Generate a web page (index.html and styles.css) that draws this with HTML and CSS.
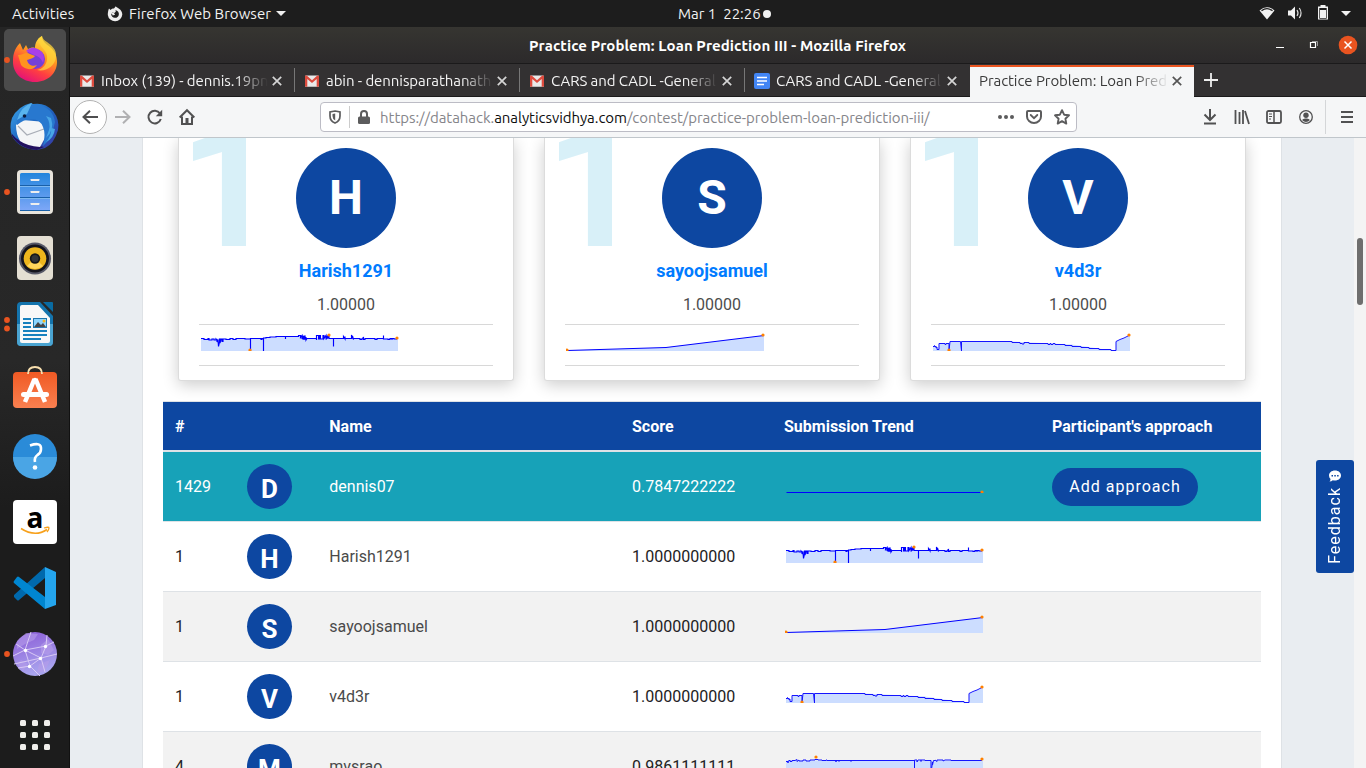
FILE: index.html
```html
<!DOCTYPE html>
<html lang="en">
<head>
<meta charset="utf-8">
<title>Practice Problem: Loan Prediction III</title>
<link rel="stylesheet" href="styles.css">
</head>
<body>
<svg class="defs" width="0" height="0">
  <defs>
    <symbol id="gmail" viewBox="0 0 14 12"><path d="M1 .5h12a1 1 0 0 1 1 1V11a.7.7 0 0 1-.7.7H.7A.7.7 0 0 1 0 11V1.500a1 1 0 0 1 1-1z" fill="#e9e9e9"/><path d="M0 1.500C0 .3 1.200.2 2 .8l5 4.400L12 .8c.8-.6 2-.5 2 .7V11a.7.7 0 0 1-.7.7h-1.600V4L7 8 2.300 4v7.700H.7A.7.7 0 0 1 0 11z" fill="#dd4b3e"/></symbol>
    <symbol id="x" viewBox="0 0 10 10"><path d="M.8.8l8.400 8.400M9.200.8L.8 9.200" fill="none" stroke="currentColor" stroke-width="1.700"/></symbol>
    <symbol id="s-harish" viewBox="0 0 200 20">
      <path d="M1 7.500H64L64.500 6.500H76V5.500H99V4.500H106V7.500H198V20H1z" fill="#cdf"/>
      <path d="M1 7.500H4V8.500H8V7.500H9V9H12V8H14V9H16V8L17 9V11L18 8.500 18.500 15.500 19.500 11V8H20V12L21 8H22V10.500H23V8H26V8.500H30V7.500H33V8.500H36V7.500H45V8H50.500V19.500V7.500H61V8.500H62V7.500H63.500V20V7H66V6.500H70V6H76V5.500H85.500V8V5.500H98.500V4.500H100.500V6.500L102 4.500V8L103 4.500V8.500L104 5V8.500L105 4.500V8.500L106 6V9L107 7.500H116.500V9V4.500H118.500V8H119.500V4.500H120.500V8H123V4.500H124V7.500L126 4.500V8.500L127.500 4.500V7.500L129 4.500V7.500H133.500V15.500V7.500H143.500V5.500L145 8V5.500V7.500H151.500V4L152.500 7.500V5L153.500 8.500V7.500H160V8.500H162V7.500L163.500 6.500V8.500H165V7.500H175V8.500H177V7.500H183.500V4.500V8H188V8.500H190V7.500H192V9V7.500H194V8H197" fill="none" stroke="#00f" stroke-width="1.150"/>
      <g fill="#ff8000"><circle cx="50" cy="19" r="1.600"/><circle cx="129" cy="4" r="1.600"/><circle cx="197" cy="7" r="1.600"/></g>
    </symbol>
    <symbol id="s-sayooj" viewBox="0 0 200 20">
      <path d="M1 19.500L100 16.500 198 4.500V20H1z" fill="#cdf"/><path d="M1 19.500L100 16.500 198 4.500" fill="none" stroke="#00f"/>
      <g fill="#ff8000"><circle cx="1" cy="19" r="1.600"/><circle cx="197" cy="4" r="1.600"/></g>
    </symbol>
    <symbol id="s-v4d3r" viewBox="0 0 200 20">
      <path d="M1 15L6.500 18 7.500 12.500H18V10.500H80L140 13.500 180 19.500 184 20V10.500L198 5V20H1z" fill="#cdf"/>
      <path d="M1 15.500H2.500V14.500L3 16L4 15V17L5 16V18.500L7 18.500V12.500H13V13.500H14V12.500H17V19.500L18 10.500H28.500L29.500 20V10.500H80V11.500H88V12.500H90V13H92V11.500H97V12.500H116V13.500H118V12.500H119V13.500H121V12.500H123V13.500H133V14.500H140V15.500H149V16.500H157V17.500H167V18.500H179V19.500H184V10.500L188 8.500 192 7 197 4.500" fill="none" stroke="#1414ff"/>
      <g fill="#ff8000"><circle cx="17" cy="19" r="1.600"/><circle cx="197" cy="4" r="1.600"/></g>
    </symbol>
    <symbol id="s-mvsrao" viewBox="0 0 200 20">
      <path d="M1 7.500H198V20H1z" fill="#cdf"/>
      <path d="M1 8.500H3V10V8H4L5 7V8.500H7V7.500H10L12 6.500V8.500L14 7V8H18V7H21V8H25V7H30V6.500H33V7H37V7.500H41V7H42V7.500H51V9V7.500H54V8.500V7.500H66V8.500V7.500H86V7V7.500H129.500V20V7H132V9L133 7H136V8.500V7H140V7.500H146V20L147.500 9V12L148.500 7.500H150V7L152 8.500V7H158V8L160 7H166V7.500H197" fill="none" stroke="#1414ff"/>
      <g fill="#ff8000"><circle cx="31" cy="4" r="1.600"/><circle cx="197" cy="6" r="1.600"/></g>
    </symbol>
    <symbol id="s-flat" viewBox="0 0 200 20"><path d="M1.500 19.500H197" stroke="#00f"/><circle cx="197" cy="19" r="1.600" fill="#ff8000"/></symbol>
    <linearGradient id="ffbody" x1=".8" y1="0" x2=".3" y2="1"><stop offset="0" stop-color="#fff44f"/><stop offset=".4" stop-color="#ff9a1f"/><stop offset=".7" stop-color="#ff4040"/><stop offset="1" stop-color="#e3107a"/></linearGradient>
    <linearGradient id="blue" x1="0" y1="0" x2="0" y2="1"><stop offset="0" stop-color="#2385dc"/><stop offset="1" stop-color="#7fa8f8"/></linearGradient>
    <linearGradient id="orange" x1="0" y1="0" x2="0" y2="1"><stop offset="0" stop-color="#f05a24"/><stop offset="1" stop-color="#f98050"/></linearGradient>
    <linearGradient id="purple" x1="0" y1="0" x2=".3" y2="1"><stop offset="0" stop-color="#8a5ad6"/><stop offset="1" stop-color="#a9a4ee"/></linearGradient>
    <linearGradient id="bird" x1="0" y1="0" x2="1" y2="1"><stop offset="0" stop-color="#39a5ea"/><stop offset=".5" stop-color="#1f62be"/><stop offset="1" stop-color="#3a35a0"/></linearGradient>
  </defs>
</svg>

<header class="topbar">
  <span class="activities">Activities</span>
  <svg class="ff-mini" width="16" height="16" viewBox="0 0 16 16"><path d="M2 2.500l1.600 1.400C4.700 2.800 6 2.500 7 2.600L8.800.3c.6 1 1.900 1.600 3.200 2.500 2 1.300 3.300 3.200 3.300 5.700A7.300 7.300 0 0 1 .8 9C.7 6.500 1.300 4 2 2.500z" fill="#eee"/><path d="M5.500 6.300c1.500.4 2.700.2 3.200-.5.3-.5 0-1.300-.4-1.800 2.500.5 4 2.500 3.500 5A3.900 3.900 0 0 1 4.200 8.500z" fill="#1d1d1d"/><path d="M4.500 6.800l3.800-.7-1.200 1.400 1 1.200-2.400.7z" fill="#eee"/></svg>
  <span class="app-name">Firefox Web Browser</span>
  <svg class="caret" width="10" height="5"><path d="M0 0h10L5 5z" fill="#eee"/></svg>
  <span class="clock">Mar 1&nbsp; 22:26</span><i class="clock-dot"></i>
  <svg class="tray" width="106" height="27" viewBox="1260 0 106 27" fill="#f2f2f2"><path d="M1259.500 10.500q7.500-6.500 15 0L1267 19.500z"/><path d="M1261.500 10.800q5.500-4.300 11 0" fill="none" stroke="#1d1d1d" stroke-width="1.300"/><path d="M1288 10.500h3l4-4v13l-4-4h-3z"/><path d="M1297 10q2 3 0 6M1299.300 8q3.500 5 0 10" fill="none" stroke="#ddd" stroke-width="1.200"/><path d="M1320.500 5h5v1.500h2.500v13h-10v-13h2.500z" fill="#f2f2f2"/><path d="M1319.300 8h7.400v10.700h-7.400z" fill="#1d1d1d"/><path d="M1320 10h6v8h-6z"/><path d="M1341 11h10l-5 5z"/></svg>
</header>

<div class="desktop">
<nav class="dock">
  <svg class="slot" viewBox="0 0 70 66"><rect x="4" y="2" width="62" height="62" rx="5" fill="#4b4b4b"/><circle cx="7" cy="33" r="2.900" fill="#e95420"/>
    <path d="M14 26c1-4 3-7 6-10l3 7 3-5 2 4c2-1 5-2 7-1 0-5 2-9 7-12 0 5 4 8 8 11 5 4 7 9 7 15 0 11-9 20-22 20S13 46 13 35c0-3 0-6 1-9z" fill="url(#ffbody)"/><path d="M38 12c1 8 8 10 9 17 1 9-5 13-10 14 9 2 18-4 19-13 1-8-5-12-9-15-3-2-4-3-5-6-2 1-3 2-4 3z" fill="#ffd43b" opacity=".75"/><circle cx="35" cy="32" r="10" fill="#7540d8"/><path d="M26 24c3-3 8-5 13-1 5 2 6 8 4 13-2-5-5-7-9-8z" fill="#a83fe8"/><path d="M18 28c5 0 8-4 12-1l5 2c-2 3-6 3-8 4 1 5 6 7 10 5-4 6-12 5-16 0z" fill="#ff941f"/></svg>
  <svg class="slot" viewBox="0 0 70 66"><path d="M12 25Q18 13 31 10l2 1q12-2 20 7 7 9 5 19-4 14-13 18l-8 2Q19 56 12 43q-3-9 0-18z" fill="url(#bird)"/><path d="M12 41q6 8 18 10l14 3-7 3Q20 56 12 43z" fill="#23105f"/><path d="M16 32l6-5 24 2-1 16-5 9q-13-1-20-6-4-7-4-16z" fill="#f4f5f7"/><path d="M18 33l9 9 17-6" fill="none" stroke="#a9adb6" stroke-width="1.200"/><path d="M17 27Q22 12 37 11q16 4 18 18l-4 16-8 8q3-12 0-19-3-8-12-8-7 0-14 6z" fill="#2878cf"/><path d="M17 27q4-14 15-17l-5 11z" fill="#59b4ef"/><circle cx="24.500" cy="23" r="1.800" fill="#0d1c3f"/><path d="M46 23q5 7 3 14l-3 8q9-8 5-20zM51 35q1 7-5 14 8-4 9-13z" fill="#48a6e6"/></svg>
  <svg class="slot" viewBox="0 0 70 66"><circle cx="7" cy="33" r="2.900" fill="#e95420"/><rect x="17" y="11" width="36" height="44" rx="4" fill="#e8e4dc"/><rect x="20" y="14" width="30" height="38" rx="1.500" fill="url(#blue)"/><path d="M20 26.500h30M20 38.500h30M20 51.500h30" stroke="#1960a8"/><path d="M20 27.500h30M20 39.500h30" stroke="#7db8f0"/><path d="M31 20v1.500h8V20M31 32v1.500h8V32M31 44v1.500h8V44" fill="#eee" stroke="#eee"/></svg>
  <svg class="slot" viewBox="0 0 70 66"><rect x="17" y="11" width="36" height="44" rx="4" fill="#e4dfd3"/><circle cx="35" cy="33.500" r="16" fill="#575867"/><circle cx="35" cy="33.500" r="14" fill="#14141d"/><circle cx="35" cy="33.500" r="11.300" fill="#edb51d"/><path d="M35 33l-8 8q8 6 16 0z" fill="#ffd65c"/><circle cx="35" cy="33.500" r="5.200" fill="#161719"/><circle cx="35" cy="33.500" r="3.500" fill="#303338"/></svg>
  <svg class="slot" viewBox="0 0 70 66"><circle cx="7" cy="29" r="2.900" fill="#e95420"/><circle cx="7" cy="37.500" r="2.900" fill="#e95420"/><path d="M21 11h19l13 14v26q0 4-4 4H21q-4 0-4-4V15q0-4 4-4z" fill="#1474ad"/><path d="M17 33h36v18q0 4-4 4H21q-4 0-4-4z" fill="#4aa4d1"/><path d="M22 14h16l12 13v23q0 2-2 2H22q-2 0-2-2V16q0-2 2-2z" fill="#f8f8f8"/><path d="M43 11h9q1 0 1 1v9z" fill="#096ba2"/><path d="M23 28h8M23 32h8M23 36h8M23 40h24M23 44h24M23 48h18" stroke="#1881be" stroke-width="2"/><path d="M33 27h14v10H33z" fill="#1b75ac"/><path d="M34 28h12v8H34z" fill="#8dd6ff"/><path d="M34 36l4-5 3 3 2-2 3 4z" fill="#444"/><circle cx="44" cy="30" r="1.500" fill="#fcb714"/></svg>
  <svg class="slot" viewBox="0 0 70 66"><rect x="13" y="15" width="44" height="36" rx="4" fill="url(#orange)"/><path d="M28 17q0-7 7-7t7 7" fill="none" stroke="#f8dfae" stroke-width="1.800"/><path d="M34.500 22l-9.500 23M35.500 22l9.500 23" stroke="#fff" stroke-width="4.500"/><rect x="21" y="35" width="28" height="5" rx="2.500" fill="#fff"/><circle cx="35" cy="23" r="2.200" fill="#fff"/></svg>
  <svg class="slot" viewBox="0 0 70 66"><circle cx="35" cy="33" r="22" fill="#2a8bd8"/><path d="M13 34h44a22 22 0 0 1-44 0z" fill="#4aa5e5"/><path d="M30 22.500q11.500-4 11 3.500 0 4-3.500 6-3.500 2.500-2.500 7" fill="none" stroke="#fff" stroke-width="2.600"/><circle cx="35" cy="44.500" r="2.300" fill="#fff"/></svg>
  <svg class="slot" viewBox="0 0 70 66"><rect x="13" y="11" width="44" height="44" rx="4" fill="#fff"/><text x="26.500" y="38.500" class="amazon-a">a</text><path d="M21 39.500q14 9 26 1" fill="none" stroke="#f7a11c" stroke-width="1.600"/><path d="M44 39q5-1.500 5 0t-2 4" fill="none" stroke="#f7a11c" stroke-width="1.300"/></svg>
  <svg class="slot" viewBox="0 0 70 66"><path d="M14 40l31-28v11L19 45q-1 1-2 0l-3-3z" fill="#0069ad"/><path d="M14 26l3-4q1-1 2 0l26 20v12L14 28q-1-1 0-2z" fill="#0086d1"/><path d="M45 12l11 5v33l-11 4z" fill="#24a5ee"/></svg>
  <svg class="slot" viewBox="0 0 70 66"><circle cx="7" cy="33" r="2.900" fill="#e95420"/><circle cx="35" cy="33" r="22" fill="url(#purple)"/><path d="M17 20l9-8 12 1-4 6-9 4-8 5zM41 24l7-6 6 11-6 5-7-2zM21 39l7 4-5 7-6-7zM39 43l11-4-5 11-8 2z" fill="#b69de9" opacity=".6"/><path d="M13 35l12-6 21-4 8-4M14 43l27-6 16-4M25 29l16 8 4 14M25 29l5 16 10 10M30 45l11-8 5-12 1-11M16 23l9 6 6-18M18 47l12-2" fill="none" stroke="#d8c9f4"/><g fill="#fff"><circle cx="25.500" cy="29.500" r="1.700"/><circle cx="45.500" cy="25.500" r="1.700"/><circle cx="40.500" cy="37.500" r="1.700"/><circle cx="29.500" cy="45.500" r="1.700"/></g></svg>
  <svg class="apps" width="30" height="30" fill="#f0eeec"><rect width="6" height="6" rx="1.500"/><rect x="12" width="6" height="6" rx="1.500"/><rect x="24" width="6" height="6" rx="1.500"/><rect y="12" width="6" height="6" rx="1.500"/><rect x="12" y="12" width="6" height="6" rx="1.500"/><rect x="24" y="12" width="6" height="6" rx="1.500"/><rect y="24" width="6" height="6" rx="1.500"/><rect x="12" y="24" width="6" height="6" rx="1.500"/><rect x="24" y="24" width="6" height="6" rx="1.500"/></svg>
</nav>

<main class="window">
  <div class="titlebar"><span class="title">Practice Problem: Loan Prediction III - Mozilla Firefox</span>
    <svg class="controls" width="90" height="36" viewBox="1270 27 90 36"><path d="M1276 47.500h8" stroke="#fff"/><path d="M1310.500 42.500h5v5h-5z" fill="none" stroke="#fff" stroke-width="1.200"/><path d="M1312 41.500h5.500V46" fill="none" stroke="#999"/><circle cx="1348" cy="45" r="9.300" fill="#e95420"/><path d="M1344.500 41.500l7 7M1351.500 41.500l-7 7" stroke="#fff" stroke-width="1.500"/></svg>
  </div>
  <div class="tabs">
    <div class="tab"><svg width="14" height="12"><use href="#gmail"/></svg><span class="label">Inbox (139) - dennis.19pn</span><svg class="close" width="10" height="10"><use href="#x"/></svg></div>
    <div class="tab"><svg width="14" height="12"><use href="#gmail"/></svg><span class="label">abin - dennisparathanath</span><svg class="close" width="10" height="10"><use href="#x"/></svg></div>
    <div class="tab"><svg width="14" height="12"><use href="#gmail"/></svg><span class="label">CARS and CADL -General</span><svg class="close" width="10" height="10"><use href="#x"/></svg></div>
    <div class="tab docs"><svg width="16" height="16"><rect width="16" height="16" rx="2" fill="#4285f4"/><path d="M3 4.500h10M3 8h10M3 11.500h7" stroke="#fff" stroke-width="1.700"/></svg><span class="label">CARS and CADL -General</span><svg class="close" width="10" height="10"><use href="#x"/></svg></div>
    <div class="tab active"><span class="label">Practice Problem: Loan Pred</span><svg class="close" width="10" height="10"><use href="#x"/></svg></div>
    <svg class="plus" width="14" height="14"><path d="M7 0v14M0 7h14" stroke="#eee" stroke-width="1.800"/></svg>
  </div>
  <div class="navbar">
    <span class="back"><svg width="16" height="14"><path d="M16 7H1.500M8 .8L1.500 7 8 13.200" fill="none" stroke="#4f4f50" stroke-width="2"/></svg></span>
    <span class="btn fwd"><svg width="16" height="14"><path d="M0 7h14.500M8 .8L14.500 7 8 13.200" fill="none" stroke="#b0b0b2" stroke-width="2"/></svg></span>
    <span class="btn"><svg width="16" height="16"><path d="M13 4.500A6.300 6.300 0 1 0 13.800 10" fill="none" stroke="#515152" stroke-width="2"/><path d="M15.200.8v6.400H8.800z" fill="#515152"/></svg></span>
    <span class="btn"><svg width="16" height="16"><path d="M.7 8.500L8 1.200l7.300 7.300" fill="none" stroke="#515152" stroke-width="2"/><path d="M3 7.500V15h10V7.500" fill="none" stroke="#515152" stroke-width="2"/><path d="M6.500 9h3v6h-3z" fill="#515152"/></svg></span>
    <div class="urlbar">
      <svg width="12" height="14"><path d="M6 1Q8.500 1.500 11 2v4q0 5-5 7Q1 11 1 6V2Q3.500 1.500 6 1z" fill="none" stroke="#5c5c5d" stroke-width="1.700"/><path d="M6.200 3.500v7Q3.500 9 3.500 6V4z" fill="#5c5c5d"/></svg>
      <i class="url-sep"></i>
      <svg width="12" height="14"><path d="M1.500 6.500h9q1.500 0 1.500 1.500v4.500q0 1.500-1.500 1.500h-9Q0 14 0 12.500V8q0-1.500 1.500-1.500z" fill="#5c5c5d"/><path d="M3 7V4q0-3 3-3t3 3v3" fill="none" stroke="#5c5c5d" stroke-width="2"/></svg>
      <span class="url">https://datahack.<b>analyticsvidhya.com</b>/contest/practice-problem-loan-prediction-iii/</span>
      <svg class="dots" width="16" height="4" fill="#5c5c5d"><circle cx="2" cy="2" r="2"/><circle cx="8" cy="2" r="2"/><circle cx="14" cy="2" r="2"/></svg>
      <svg class="pocket" width="16" height="14"><path d="M2 1h12q1 0 1 1v4.500a7 6.500 0 0 1-14 0V2q0-1 1-1z" fill="none" stroke="#5c5c5d" stroke-width="2"/><path d="M4.700 5L8 8.200 11.300 5" fill="none" stroke="#5c5c5d" stroke-width="1.800" stroke-linecap="round"/></svg>
      <svg class="star" width="16" height="16"><path d="M8 1.200l2.100 4.500 4.900.6-3.600 3.400.9 4.900L8 12.200l-4.300 2.400.9-4.900L1 6.300l4.900-.6z" fill="none" stroke="#5c5c5d" stroke-width="1.900" stroke-linejoin="round"/></svg>
    </div>
    <span class="btn first"><svg width="14" height="16"><path d="M7 0v10M1.500 5.500L7 11l5.500-5.500M1 14.500h12" fill="none" stroke="#515152" stroke-width="2"/></svg></span>
    <span class="btn"><svg width="16" height="14"><path d="M1.500 0v14M5.500 2v12M9 0v14M11 1l4 13" stroke="#515152" stroke-width="1.800"/></svg></span>
    <span class="btn"><svg width="16" height="14"><rect x="1" y="1" width="14" height="12" rx="1.500" fill="none" stroke="#515152" stroke-width="1.800"/><path d="M8 1v12" stroke="#515152" stroke-width="1.500"/><path d="M3 4h3M3 6.500h3M3 9h2" stroke="#515152"/></svg></span>
    <span class="btn"><svg width="14" height="14"><circle cx="7" cy="7" r="6.300" fill="none" stroke="#515152" stroke-width="1.300"/><circle cx="7" cy="5.300" r="2.700" fill="#515152"/><path d="M3 10q1.500-2 4-1.500 2.500-.5 4 1.500-4 4-8 0z" fill="#515152"/></svg></span>
    <i class="nav-sep"></i>
    <span class="btn"><svg width="12" height="12"><path d="M0 1h12M0 6h12M0 11h12" stroke="#515152" stroke-width="2"/></svg></span>
  </div>

  <div class="viewport">
    <div class="page">
      <section class="cards">
        <article class="card"><span class="rank">1</span><span class="avatar big">H</span><a class="user">Harish1291</a><span class="points">1.00000</span><div class="trend"><svg width="200" height="20"><use href="#s-harish"/></svg></div></article>
        <article class="card"><span class="rank">1</span><span class="avatar big">S</span><a class="user">sayoojsamuel</a><span class="points">1.00000</span><div class="trend"><svg width="200" height="20"><use href="#s-sayooj"/></svg></div></article>
        <article class="card"><span class="rank">1</span><span class="avatar big">V</span><a class="user">v4d3r</a><span class="points">1.00000</span><div class="trend"><svg width="200" height="20"><use href="#s-v4d3r"/></svg></div></article>
      </section>
      <section class="board">
        <div class="row head"><span>#</span><span></span><span>Name</span><span>Score</span><span>Submission Trend</span><span>Participant's approach</span></div>
        <div class="row me"><span>1429</span><span class="avatar">D</span><span class="name">dennis07</span><span>0.7847222222</span><svg width="200" height="20"><use href="#s-flat"/></svg><a class="add">Add approach</a></div>
        <div class="row"><span>1</span><span class="avatar">H</span><span class="name">Harish1291</span><span>1.0000000000</span><svg width="200" height="20"><use href="#s-harish"/></svg></div>
        <div class="row alt"><span>1</span><span class="avatar">S</span><span class="name">sayoojsamuel</span><span>1.0000000000</span><svg width="200" height="20"><use href="#s-sayooj"/></svg></div>
        <div class="row"><span>1</span><span class="avatar">V</span><span class="name">v4d3r</span><span>1.0000000000</span><svg width="200" height="20"><use href="#s-v4d3r"/></svg></div>
        <div class="row alt"><span>4</span><span class="avatar">M</span><span class="name">mvsrao</span><span>0.9861111111</span><svg width="200" height="20"><use href="#s-mvsrao"/></svg></div>
      </section>
    </div>
    <div class="scrollbar"><i></i></div>
    <a class="feedback"><span>Feedback</span><svg width="12" height="12"><path d="M6 .5c3.500 0 6 2.200 6 5s-2.500 5-6 5c-.8 0-1.500-.1-2.200-.3Q2.500 11.500.5 11.500q1-1 1-2.500Q0 7.500 0 5.500c0-2.800 2.500-5 6-5z" fill="#fff"/><path d="M2.500 5h1.500v1.500H2.500zM5.300 5h1.500v1.500H5.300zM8.100 5h1.500v1.500H8.100z" fill="#0d47a1"/></svg></a>
  </div>
</main>
</div>
</body>
</html>
```
FILE: styles.css
```css
* { box-sizing: border-box; }
body { margin: 0; width: 1366px; height: 768px; overflow: hidden; display: flex; flex-direction: column; background: #1d1d1d; font-family: Ubuntu, "Noto Sans", sans-serif; font-size: 15px; }
svg { display: block; flex: none; overflow: visible; }
.defs { position: absolute; }

/* desktop panel */
.topbar { height: 27px; flex: none; display: flex; align-items: center; color: #f2f2f2; line-height: 27px; white-space: nowrap; }
.activities { margin-left: 12px; width: 95px; flex: none; letter-spacing: .08px; }
.ff-mini { margin-right: 6px; }
.app-name { width: 147px; flex: none; letter-spacing: .05px; }
.clock { margin-left: 392px; width: 85px; flex: none; }
.clock-dot { width: 8px; height: 8px; border-radius: 50%; background: #f2f2f2; }
.tray { margin-left: auto; }

.desktop { flex: 1; display: flex; min-height: 0; }
.dock { width: 70px; flex: none; display: flex; flex-direction: column; background: linear-gradient(#252525, #282828 45%, #1c1c1c 65%); border-right: 1px solid #111; }
.slot { width: 70px; height: 66px; }
.apps { margin: 33px 0 0 20px; }
.amazon-a { font: 700 28px "Open Sans", sans-serif; fill: #000; }

/* browser chrome */
.window { flex: 1; min-width: 0; display: flex; flex-direction: column; }
.titlebar { height: 37px; flex: none; display: flex; justify-content: flex-end; background: linear-gradient(#363531, #2c2a2b); border-bottom: 1px solid #1b1a1b; color: #fff; font-weight: 700; line-height: 38px; white-space: nowrap; }
.title { width: 741px; letter-spacing: .075px; }
.controls { margin-right: 6px; }
.tabs { height: 33px; flex: none; display: flex; align-items: center; background: #333132; border-bottom: 1px solid #1b1a1b; color: #f4f4f4; }
.tab { width: 225px; height: 32px; flex: none; display: flex; align-items: center; padding: 1px 0 0 10px; background: linear-gradient(#777, #777) right center / 1px 24px no-repeat; }
.tab .label { margin-left: 7px; width: 167px; overflow: hidden; white-space: nowrap; line-height: 20px; letter-spacing: -.07px; -webkit-mask-image: linear-gradient(90deg, #000 136px, transparent 167px); mask-image: linear-gradient(90deg, #000 136px, transparent 167px); }
.tab .close { margin-left: 4px; color: #d5d5d5; }
.docs { padding-left: 9px; background: none; }
.docs .label { margin-left: 6px; }
.active { height: 32px; margin: 1px 0 -1px; width: 224px; padding: 0 0 2px 9px; background: #f5f6f7; border-top: 2px solid #e95420; color: #3a3a3a; }
.tab.active .label { margin-left: 0; width: 189px; -webkit-mask-image: linear-gradient(90deg, #000 156px, transparent 190px); mask-image: linear-gradient(90deg, #000 156px, transparent 190px); }
.tab.active .close { color: #555; }
.plus { margin-left: 10px; }
.navbar { height: 41px; flex: none; display: flex; align-items: center; padding-left: 3px; background: #f5f6f7; border-bottom: 1px solid #c0c6cb; }
.back { width: 34px; height: 34px; border: 1px solid #b2b2b2; border-radius: 50%; background: #fff; display: grid; place-items: center; }
.btn { width: 32px; height: 32px; display: grid; place-items: center; flex: none; }
.urlbar { margin-left: 117px; width: 757px; height: 30px; flex: none; display: flex; align-items: center; padding-left: 8px; background: #fff; border: 1px solid #bcbcc5; border-radius: 4px; }
.url-sep { width: 1px; height: 22px; margin: 0 8px 0 8px; background: #ccc; }
.url { margin-left: 10px; width: 618px; color: #85858a; white-space: nowrap; letter-spacing: -.04px; }
.url b { font-weight: 400; color: #0c0c0d; }
.pocket { margin-left: 12px; }
.star { margin-left: 12px; }
.first { margin-left: 117px; }
.nav-sep { width: 1px; height: 34px; margin: 0 5px 0 3px; background: #d4d6d8; }

/* leaderboard page */
.viewport { position: relative; flex: 1; min-height: 0; overflow: hidden; display: flex; background: #e9edf1; font-family: Roboto, sans-serif; font-size: 16px; }
.page { width: 1140px; height: 640px; margin-left: 72px; flex: none; padding: 0 20px; background: #fff; border: solid #dee2e6; border-width: 0 1px; }
.cards { display: flex; gap: 30px; padding: 0 15px; }
.card { position: relative; width: 336px; height: 243px; flex: none; padding: 10px 20px 0; display: flex; flex-direction: column; align-items: center; background: #fff; border: 1px solid #dcdcdc; border-top: 0; border-radius: 0 0 3px 3px; box-shadow: 0 4px 16px rgba(0, 0, 0, .2); }
.rank { position: absolute; left: 0; bottom: 107px; font-size: 171px; font-weight: 700; line-height: 171px; color: #d8f0f8; }
.avatar { width: 45px; height: 45px; border-radius: 50%; background: #0d47a1; color: #fff; font-weight: 700; font-size: 26px; line-height: 51px; text-align: center; }
.avatar.big { position: relative; width: 100px; height: 100px; font-size: 48px; line-height: 100px; }
.user { margin-top: 11px; font-size: 18px; font-weight: 700; line-height: 24px; color: #007bff; }
.points { margin-top: 10px; line-height: 24px; color: #4c4c4c; }
.trend { width: 294px; height: 42px; margin-top: 7px; padding: 6px 0 0 1px; border: solid #d8d8d8; border-width: 1px 0; }
.board { margin-top: 20px; border-top: 1px solid #dee2e6; }
.row { display: grid; grid-template-columns: 72px 82.300px 302.700px 152px 268px 221px; height: 70px; align-items: center; padding-left: 12px; border-bottom: 1px solid #dee2e6; color: #222; }
.row svg { margin: 21px 0 0 1px; align-self: start; }
.head { height: 50px; border-bottom-width: 2px; background: #0d47a1; background-clip: padding-box; color: #fff; font-weight: 700; }
.me { background: #17a2b8; background-clip: padding-box; color: #fff; }
.alt { background: #f2f2f2; }
.name { color: #4a4a4a; }
.me .name { color: #fff; }
.add { width: 146px; height: 38px; border-radius: 19px; background: #0d47a1; color: #fff; letter-spacing: 1px; line-height: 37px; text-align: center; }
.scrollbar { width: 12px; margin-left: auto; padding: 100px 3px 0; background: #f4f4f4; }
.scrollbar i { display: block; height: 67px; border-radius: 3px; background: #6e6e6e; }
.feedback { position: absolute; right: 12px; top: 322px; width: 38px; height: 113px; padding: 10px 2px 9px 0; display: flex; flex-direction: column-reverse; align-items: center; gap: 5px; border-radius: 3px; background: #0d47a1; color: #fff; }
.feedback svg { margin-left: 2px; }
.feedback span { writing-mode: vertical-rl; transform: rotate(180deg); letter-spacing: 1px; }
```
